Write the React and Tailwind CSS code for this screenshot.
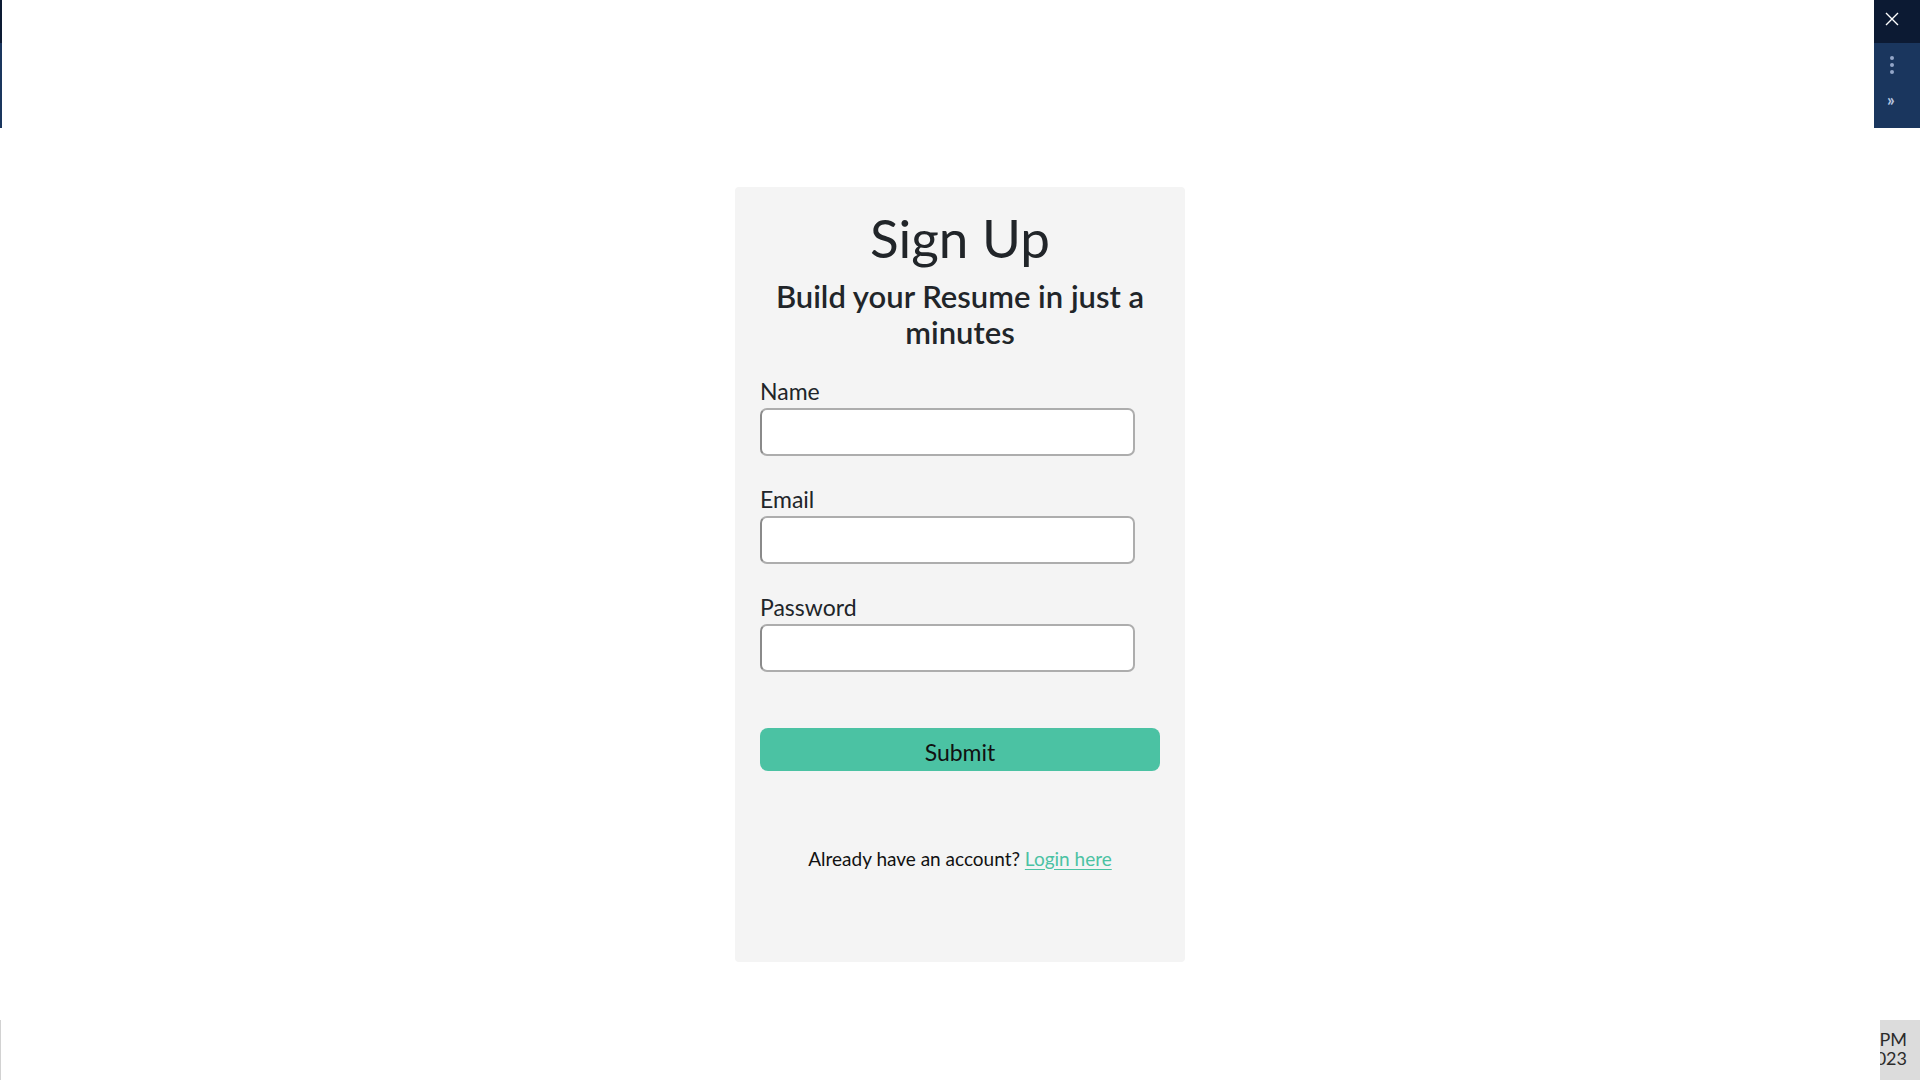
import React from 'react';

const Field = ({ label, type = 'text' }) => (
  <div className="mb-[28px]">
    <label className="block text-[23px] leading-[30px] text-[#212529] mb-[2px]">{label}</label>
    <input
      type={type}
      className="block w-[375px] h-[48px] bg-white rounded-[7px] border-2 border-[#adadad] border-l-[#8a8a8a] px-3 outline-none"
    />
  </div>
);

const App = () => {
  return (
    <div
      className="relative min-h-screen w-full bg-white overflow-hidden"
      style={{ fontFamily: 'Lato, "Open Sans", sans-serif' }}
    >
      {/* left edge strip */}
      <div className="absolute left-0 top-0 w-[2px] h-[128px] flex flex-col">
        <div className="h-[43px] bg-[#0c1a33]" />
        <div className="flex-1 bg-[#1a365e]" />
      </div>
      <div className="absolute left-0 top-[1020px] w-px h-[60px] bg-[#d2d2d2]" />

      {/* side panel top right */}
      <div className="absolute right-0 top-0 w-[46px] h-[128px] flex flex-col">
        <div className="h-[43px] bg-[#0c1a33] relative">
          <svg className="absolute left-[11px] top-[12px]" width="14" height="14" viewBox="0 0 14 14">
            <path d="M1 1 L13 13 M13 1 L1 13" stroke="#ffffff" strokeWidth="1.4" fill="none" />
          </svg>
        </div>
        <div className="flex-1 bg-[#1a365e] relative">
          <div className="absolute left-[16px] top-[13px] flex flex-col gap-[3px]">
            <span className="block w-[4px] h-[4px] rounded-full bg-[#93a6c8]" />
            <span className="block w-[4px] h-[4px] rounded-full bg-[#93a6c8]" />
            <span className="block w-[4px] h-[4px] rounded-full bg-[#93a6c8]" />
          </div>
          <span className="absolute left-[13px] top-[52px] text-[17px] leading-[10px] font-bold text-[#b8c6e0]">»</span>
        </div>
      </div>

      {/* clock box bottom right */}
      <div className="absolute left-[1880px] top-[1020px] w-[40px] h-[60px] bg-[#dcdcdc] overflow-hidden">
        <div className="absolute right-[13px] top-[10px] text-right whitespace-nowrap text-[18px] leading-[19px] text-[#2b2b2b]">
          <div>4:27 PM</div>
          <div>5/12/2023</div>
        </div>
      </div>

      {/* card */}
      <div className="pt-[187px] flex justify-center">
        <div className="w-[450px] h-[775px] bg-[#f4f4f4] rounded-[4px] px-[25px] pt-[19px]">
          <h1 className="text-center text-[53px] leading-[1.2] font-normal text-[#212529] mb-[8px]">Sign Up</h1>
          <h4 className="text-center text-[31px] leading-[36px] font-semibold text-[#212529] mb-[26px]">
            Build your Resume in just a minutes
          </h4>
          <form onSubmit={(e) => e.preventDefault()}>
            <Field label="Name" />
            <Field label="Email" type="email" />
            <Field label="Password" type="password" />
            <button
              type="submit"
              className="mt-[28px] w-[400px] h-[43px] rounded-[8px] bg-[#4bc2a3] text-[23px] text-[#111] pt-[7px]"
            >
              Submit
            </button>
          </form>
          <p className="mt-[73px] text-center text-[19px] leading-[30px] text-[#111]">
            Already have an account?{' '}
            <a href="#" className="text-[#4bc2a3] underline underline-offset-[3px]">Login here</a>
          </p>
        </div>
      </div>
    </div>
  );
};

export default App;
